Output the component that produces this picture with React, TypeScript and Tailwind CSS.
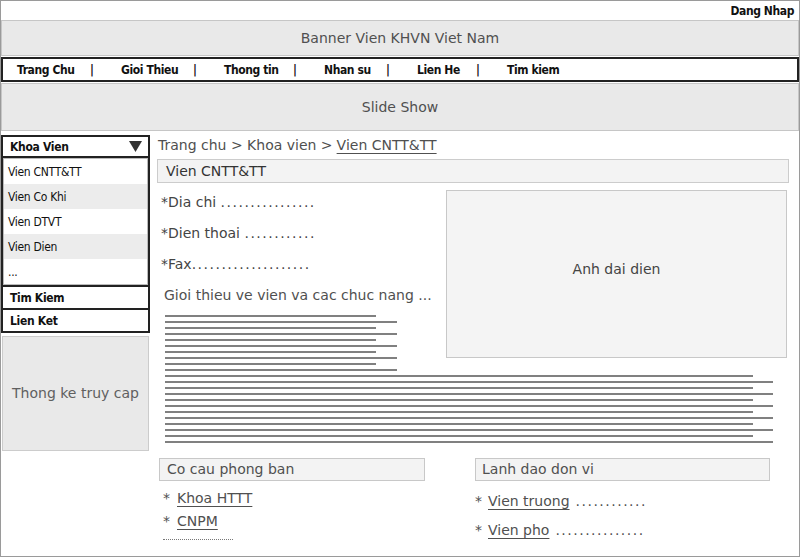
const navItems = [
  { label: "Trang Chu", w: "w-[73px]" },
  { label: "Gioi Thieu", w: "w-[72px]" },
  { label: "Thong tin", w: "w-[69px]" },
  { label: "Nhan su", w: "w-[62px]" },
  { label: "Lien He", w: "w-[59px]" },
  { label: "Tim kiem", w: "" },
];
const khoaItems = ["Vien CNTT&TT", "Vien Co Khi", "Vien DTVT", "Vien Dien", "..."];

const narrow = "font-['Liberation_Sans_Narrow','DejaVu_Sans_Condensed',sans-serif]";
const sketch = "font-['DejaVu_Sans',sans-serif]";

function Dots({ n }: { n: number }) {
  return <span className="tracking-[1.5px]">{".".repeat(n)}</span>;
}

function Lines({ count, short, long }: { count: number; short: string; long: string }) {
  return (
    <div className="flex flex-col">
      {Array.from({ length: count }).map((_, i) => (
        <div key={i} className={`h-[2px] mb-[4px] bg-[#808080] ${i % 2 === 0 ? short : long}`} />
      ))}
    </div>
  );
}

export default function App() {
  return (
    <div className={`w-[800px] h-[557px] border border-[#9a9a9a] bg-white overflow-hidden flex flex-col ${sketch}`}>
      {/* top bar */}
      <div className={`h-[19px] flex items-center justify-end pr-[5px] text-[12px] font-bold tracking-[-0.4px] text-[#111] ${narrow}`}>
        Dang Nhap
      </div>

      {/* banner */}
      <div className="h-[36px] border border-[#c6c6c6] bg-[#e9e9e9] flex items-center justify-center text-[14px] text-[#505050]">
        Banner Vien KHVN Viet Nam
      </div>

      {/* nav */}
      <div className={`mt-[1px] h-[25px] border-2 border-[#222] flex items-center pl-[14px] text-[12px] font-bold tracking-[-0.4px] text-[#111] ${narrow}`}>
        {navItems.map((item, i) => (
          <div key={item.label} className="flex">
            <span className={item.w}>{item.label}</span>
            {i < navItems.length - 1 && <span className="w-[31px]">|</span>}
          </div>
        ))}
      </div>

      {/* slide show */}
      <div className="mt-[1px] h-[48px] border border-[#c6c6c6] bg-[#e9e9e9] flex items-center justify-center text-[14px] text-[#505050]">
        Slide Show
      </div>

      <div className="flex mt-[4px]">
        {/* sidebar */}
        <div className="w-[149px] flex flex-col">
          <div className={`h-[23px] border-2 border-[#222] bg-white flex items-center justify-between pl-[7px] pr-[6px] text-[12px] font-bold tracking-[-0.3px] text-[#111] ${narrow}`}>
            <span>Khoa Vien</span>
            <svg width="13" height="11" viewBox="0 0 13 11">
              <path d="M0 0 L13 0 L6.5 11 Z" fill="#333" />
            </svg>
          </div>
          <div className="border-x-2 border-b-2 border-[#222]">
            <div className={`border border-[#bbb] text-[12px] tracking-[-0.3px] text-[#111] ${narrow}`}>
              {khoaItems.map((k, i) => (
                <div
                  key={k}
                  className={`h-[25px] flex items-center pl-[4px] ${i % 2 === 1 ? "bg-[#ececec]" : "bg-white"}`}
                >
                  {k}
                </div>
              ))}
            </div>
          </div>
          <div className={`h-[23px] border-x-2 border-b-2 border-[#222] flex items-center pl-[7px] text-[12px] font-bold tracking-[-0.3px] text-[#111] ${narrow}`}>
            Tim Kiem
          </div>
          <div className={`h-[23px] border-x-2 border-b-2 border-[#222] flex items-center pl-[7px] text-[12px] font-bold tracking-[-0.3px] text-[#111] ${narrow}`}>
            Lien Ket
          </div>
          <div className="mt-[3px] ml-[1px] w-[147px] h-[115px] border border-[#cccccc] bg-[#e9e9e9] flex items-center justify-center text-[14px] text-[#606060]">
            Thong ke truy cap
          </div>
        </div>

        {/* content */}
        <div className="ml-[7px] w-[633px] flex flex-col">
          <div className="h-[20px] flex items-center pl-[1px] text-[14px] text-[#505050]">
            Trang chu &gt; Khoa vien &gt; <span className="ml-[4px] underline underline-offset-[3px]">Vien CNTT&amp;TT</span>
          </div>
          <div className="mt-[4px] w-[632px] h-[24px] border border-[#cccccc] bg-[#f3f3f3] flex items-center pl-[8px] text-[14px] text-[#333]">
            Vien CNTT&amp;TT
          </div>

          <div className="flex">
            <div className="w-[289px] pt-[4px] flex flex-col text-[14px] text-[#444]">
              <div className="h-[31px] flex items-center pl-[4px]">
                *Dia chi&nbsp;<Dots n={16} />
              </div>
              <div className="h-[31px] flex items-center pl-[4px]">
                *Dien thoai&nbsp;<Dots n={12} />
              </div>
              <div className="h-[31px] flex items-center pl-[4px]">
                *Fax<Dots n={20} />
              </div>
              <div className="h-[30px] flex items-center pl-[7px] text-[#505050]">
                Gioi thieu ve vien va cac chuc nang ...
              </div>
              <div className="mt-[5px] pl-[8px]">
                <Lines count={10} short="w-[211px]" long="w-[232px]" />
              </div>
            </div>
            <div className="mt-[7px] w-[341px] h-[168px] border border-[#c8c8c8] bg-[#f4f4f4] flex items-center justify-center pb-[10px] text-[14px] text-[#444]">
              Anh dai dien
            </div>
          </div>

          <div className="pl-[8px]">
            <Lines count={12} short="w-[588px]" long="w-[608px]" />
          </div>

          <div className="mt-[11px] flex text-[14px] text-[#505050]">
            <div className="ml-[2px] w-[266px] flex flex-col">
              <div className="h-[23px] border border-[#c8c8c8] bg-[#f3f3f3] flex items-center pl-[7px]">
                Co cau phong ban
              </div>
              <div className="mt-[6px] h-[23px] flex items-center pl-[4px]">
                <span>*</span>
                <span className="ml-[7px] underline underline-offset-[3px]">Khoa HTTT</span>
              </div>
              <div className="h-[23px] flex items-center pl-[4px]">
                <span>*</span>
                <span className="ml-[7px] underline underline-offset-[3px]">CNPM</span>
              </div>
              <div className="mt-[6px] ml-[4px] w-[70px] border-b border-dotted border-[#777]" />
            </div>
            <div className="ml-[50px] w-[295px] flex flex-col">
              <div className="h-[23px] border border-[#c8c8c8] bg-[#f3f3f3] flex items-center pl-[6px]">
                Lanh dao don vi
              </div>
              <div className="mt-[9px] h-[23px] flex items-center">
                <span>*</span>
                <span className="ml-[6px] underline underline-offset-[3px]">Vien truong</span>
                <span className="ml-[6px]">
                  <Dots n={12} />
                </span>
              </div>
              <div className="mt-[6px] h-[23px] flex items-center">
                <span>*</span>
                <span className="ml-[6px] underline underline-offset-[3px]">Vien pho</span>
                <span className="ml-[6px]">
                  <Dots n={15} />
                </span>
              </div>
            </div>
          </div>
        </div>
      </div>
    </div>
  );
}
